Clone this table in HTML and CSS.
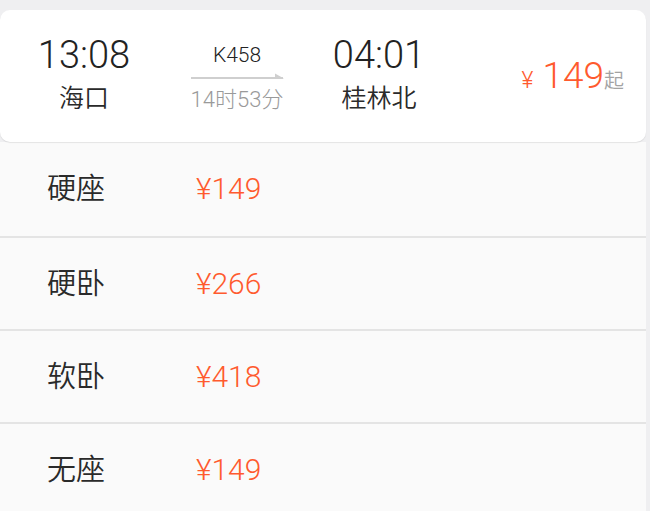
FILE: index.html
```html
<!DOCTYPE html>
<html lang="zh-CN">
<head>
<meta charset="utf-8">
<title>K458</title>
<link rel="stylesheet" href="styles.css">
</head>
<body>
<div class="page">
  <div class="card">
    <div class="col col-dep">
      <div class="time">13:08</div>
      <div class="station">海口</div>
    </div>
    <div class="col col-mid">
      <div class="train">K458</div>
      <svg class="arrow" width="94" height="8" viewBox="0 0 94 8">
        <rect x="0" y="5" width="92" height="2" fill="#cfcfcf"/>
        <polygon points="84,1.5 93,6.5 84,6.5" fill="#cfcfcf"/>
      </svg>
      <div class="duration">14时53分</div>
    </div>
    <div class="col col-arr">
      <div class="time">04:01</div>
      <div class="station">桂林北</div>
    </div>
    <div class="col col-price">
      <span class="yen">¥</span><span class="amount">149</span><span class="qi">起</span>
    </div>
  </div>
  <ul class="seats">
    <li class="seat seat-first"><span class="seat-name">硬座</span><span class="seat-price">¥149</span></li>
    <li class="seat"><span class="seat-name">硬卧</span><span class="seat-price">¥266</span></li>
    <li class="seat"><span class="seat-name">软卧</span><span class="seat-price">¥418</span></li>
    <li class="seat"><span class="seat-name">无座</span><span class="seat-price">¥149</span></li>
  </ul>
</div>
</body>
</html>
```

FILE: styles.css
```css
html, body {
  margin: 0;
  padding: 0;
  background: #efeff1;
  font-family: Roboto, "Noto Sans CJK SC", sans-serif;
  color: #333;
}

.page {
  width: 646px;
  padding-top: 10px;
}

.card {
  display: flex;
  height: 132px;
  box-sizing: border-box;
  padding-top: 23px;
  background: #fff;
  border-radius: 10px;
  box-shadow: 0 1px 1px rgba(0, 0, 0, 0.09);
  position: relative;
  z-index: 1;
}

.col {
  display: flex;
  flex-direction: column;
  align-items: center;
}

.col-dep { width: 168px; }
.col-mid { width: 138px; padding-top: 9px; }
.col-arr { width: 146px; }

.time {
  font-size: 38px;
  font-weight: 300;
  line-height: 44px;
  color: #222;
}

.station {
  margin-top: 7px;
  font-size: 25px;
  font-weight: 350;
  line-height: 30px;
  color: #2a2a2a;
}

.train {
  font-size: 21px;
  font-weight: 300;
  line-height: 26px;
  color: #222;
}

.arrow {
  display: block;
  margin-top: 4px;
  margin-left: 2px;
}

.duration {
  margin-top: 7px;
  font-size: 22px;
  font-weight: 300;
  line-height: 26px;
  color: #9a9a9a;
}

.col-price {
  flex: 1;
  flex-direction: row;
  align-items: baseline;
  justify-content: flex-end;
  padding-top: 21px;
  padding-right: 22px;
  height: 44px;
  line-height: 44px;
  color: #ff5a2e;
}

.yen {
  font-size: 23px;
  font-weight: 300;
  margin-right: 9px;
}

.amount {
  font-size: 37px;
  font-weight: 300;
}

.qi {
  font-size: 20px;
  font-weight: 350;
  color: #a3a3a3;
}

.seats {
  list-style: none;
  margin: 0;
  padding: 0;
  background: #fafafa;
}

.seat {
  display: flex;
  align-items: center;
  height: 91px;
  padding-left: 47px;
  border-top: 2px solid #e4e4e4;
}

.seat-first {
  height: 94px;
  border-top: 0;
}

.seat-name {
  width: 149px;
  font-size: 29px;
  font-weight: 350;
  line-height: 34px;
  color: #2a2a2a;
}

.seat-price {
  font-size: 30px;
  font-weight: 300;
  line-height: 34px;
  color: #ff5a2e;
}
```
